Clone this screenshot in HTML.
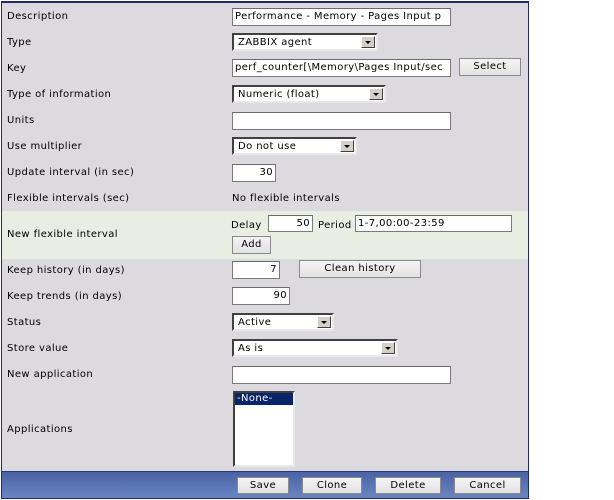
<!DOCTYPE html>
<html><head><meta charset="utf-8"><style>
*{box-sizing:border-box;margin:0;padding:0}
body{width:614px;height:500px;background:#fff;position:relative;overflow:hidden;font-family:"DejaVu Sans","Liberation Sans",sans-serif;font-size:10px;letter-spacing:0.4px;color:#000}
#panel{position:absolute;left:1px;top:1px;width:528px;height:498px;background:#dcdadf;border:1px solid #232a6a;border-top:2px solid #232a6a}
.band{position:absolute;left:2px;width:526px;top:211px;height:48px;background:#e8eee2}
.foot{position:absolute;left:2px;width:526px;top:471px;height:27px;background:linear-gradient(#4862a4,#6a86c2);border-top:1px solid #2a3a7a}
.l{position:absolute;left:7px;white-space:nowrap;line-height:12px}
.t{position:absolute;white-space:nowrap;line-height:12px}
.in{position:absolute;background:#fff;border:1px solid #7a7a7a;border-top-color:#6a6a6a;height:18px;padding:0 2px;line-height:16px;white-space:nowrap;overflow:hidden;font-size:10px}
.r{text-align:right}
.sel{position:absolute;background:#fff;border:2px solid;border-color:#404040 #e8e8e8 #e8e8e8 #404040;height:18px;padding:0 4px;line-height:15px;white-space:nowrap}
.sel i{position:absolute;right:1px;top:1px;width:14px;height:12px;background:#d4d0c8;border:1px solid;border-color:#fff #404040 #404040 #fff}
.sel i:after{content:"";position:absolute;left:3px;top:4px;border:3px solid transparent;border-top:3px solid #000;border-bottom:0}
.b{position:absolute;background:linear-gradient(#f4f4f4,#e2e2e2);border:1px solid #8a8a8a;height:18px;text-align:center;line-height:16px;white-space:nowrap}
.f .b{height:17px}
</style></head><body>
<div id="panel"></div>
<div class="band"></div>
<div class="foot"></div>

<div class="l" style="top:11px">Description</div>
<div class="l" style="top:37px">Type</div>
<div class="l" style="top:63px">Key</div>
<div class="l" style="top:89px">Type of information</div>
<div class="l" style="top:115px">Units</div>
<div class="l" style="top:141px">Use multiplier</div>
<div class="l" style="top:167px">Update interval (in sec)</div>
<div class="l" style="top:193px">Flexible intervals (sec)</div>
<div class="l" style="top:229px">New flexible interval</div>
<div class="l" style="top:265px">Keep history (in days)</div>
<div class="l" style="top:291px">Keep trends (in days)</div>
<div class="l" style="top:317px">Status</div>
<div class="l" style="top:343px">Store value</div>
<div class="l" style="top:369px">New application</div>
<div class="l" style="top:424px">Applications</div>

<div class="in" style="left:232px;top:8px;width:219px">Performance - Memory - Pages Input p</div>
<div class="sel" style="left:232px;top:33px;width:146px">ZABBIX agent<i></i></div>
<div class="in" style="left:232px;top:59px;width:219px">perf_counter[\Memory\Pages Input/sec</div>
<div class="b" style="left:459px;top:58px;width:62px">Select</div>
<div class="sel" style="left:232px;top:85px;width:154px">Numeric (float)<i></i></div>
<div class="in" style="left:232px;top:112px;width:219px"></div>
<div class="sel" style="left:232px;top:137px;width:125px">Do not use<i></i></div>
<div class="in r" style="left:232px;top:164px;width:44px">30</div>
<div class="t" style="left:232px;top:193px">No flexible intervals</div>

<div class="t" style="left:231px;top:220px">Delay</div>
<div class="in r" style="left:268px;top:215px;width:45px;height:17px;line-height:15px">50</div>
<div class="t" style="left:318px;top:220px">Period</div>
<div class="in" style="left:355px;top:215px;width:157px;height:17px;line-height:15px">1-7,00:00-23:59</div>
<div class="b" style="left:232px;top:236px;width:39px">Add</div>

<div class="in r" style="left:232px;top:261px;width:48px">7</div>
<div class="b" style="left:299px;top:260px;width:122px">Clean history</div>
<div class="in r" style="left:232px;top:287px;width:58px">90</div>
<div class="sel" style="left:232px;top:313px;width:102px">Active<i></i></div>
<div class="sel" style="left:232px;top:339px;width:166px">As is<i></i></div>
<div class="in" style="left:232px;top:366px;width:219px"></div>
<div style="position:absolute;left:233px;top:391px;width:62px;height:76px;background:#fff;border:2px solid;border-color:#404040 #e8e8e8 #e8e8e8 #404040"><div style="background:#0a246a;color:#fff;height:12px;line-height:12px;padding-left:2px">-None-</div></div>

<div class="f">
<div class="b" style="left:237px;top:477px;width:52px">Save</div>
<div class="b" style="left:302px;top:477px;width:60px">Clone</div>
<div class="b" style="left:375px;top:477px;width:66px">Delete</div>
<div class="b" style="left:454px;top:477px;width:67px">Cancel</div>
</div>
</body></html>
